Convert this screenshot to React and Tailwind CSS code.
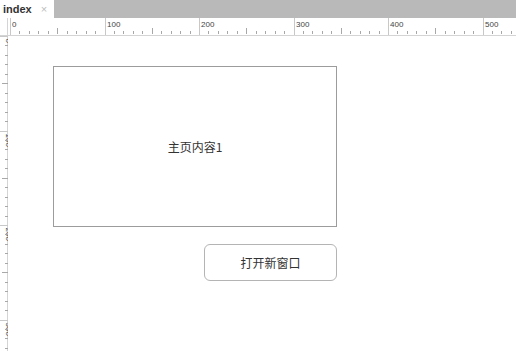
import React from 'react';

const SCALE = 0.945;

// Horizontal ruler along the top of the canvas
const TopRuler = () => {
  const ticks = [];
  for (let u = 0; u <= 540; u += 10) ticks.push(u);
  return (
    <svg width="508" height="17" className="block">
      {ticks.map((u) => {
        const x = 2.5 + Math.round(u * SCALE);
        if (u % 100 === 0) {
          return (
            <g key={u}>
              <line x1={x} y1="0" x2={x} y2="17" stroke="#c8c8c8" strokeWidth="1" />
              <text x={x + 1.5} y="9" fontSize="8" fill="#444" fontFamily="Liberation Sans, Arial, sans-serif">
                {u}
              </text>
            </g>
          );
        }
        const h = u % 50 === 0 ? 6 : 3;
        return <line key={u} x1={x} y1={16 - h} x2={x} y2="16" stroke="#a8a8a8" strokeWidth="1" />;
      })}
    </svg>
  );
};

// Vertical ruler along the left of the canvas
const LeftRuler = () => {
  const ticks = [];
  for (let u = 0; u <= 330; u += 10) ticks.push(u);
  return (
    <svg width="8" height="315" className="block">
      {ticks.map((u) => {
        const y = 0.5 + Math.round(u * SCALE);
        if (u % 100 === 0) {
          return (
            <g key={u}>
              <line x1="0" y1={y} x2="8" y2={y} stroke="#c8c8c8" strokeWidth="1" />
              <text
                x="0"
                y="0"
                fontSize="8"
                fill="#444"
                fontFamily="Liberation Sans, Arial, sans-serif"
                transform={`translate(6 ${y + 2}) rotate(90)`}
              >
                {u}
              </text>
            </g>
          );
        }
        const w = u % 50 === 0 ? 6 : 3;
        return <line key={u} x1={8 - w} y1={y} x2="8" y2={y} stroke="#a8a8a8" strokeWidth="1" />;
      })}
    </svg>
  );
};

const App = () => {
  return (
    <div className="w-[516px] h-[351px] overflow-hidden bg-white flex flex-col">
      {/* Tab strip */}
      <div className="h-[18px] bg-[#b9b9b9] flex shrink-0">
        <div className="w-[54px] bg-white flex items-center pl-[3px] gap-[9px]">
          <span className="text-[11px] font-bold text-[#333] leading-none font-['Liberation_Sans',Arial,sans-serif]">index</span>
          <span className="text-[11px] text-[#bdbdbd] leading-none font-['Liberation_Sans',Arial,sans-serif]">×</span>
        </div>
      </div>

      {/* Top ruler */}
      <div className="flex h-[18px] shrink-0 border-b border-[#d4d4d4]">
        <div className="w-[8px] border-r border-[#d4d4d4]" />
        <TopRuler />
      </div>

      {/* Left ruler + canvas */}
      <div className="flex flex-1">
        <div className="w-[8px] border-r border-[#d4d4d4] shrink-0">
          <LeftRuler />
        </div>
        <div className="flex-1 flex flex-col pl-[45px] pt-[30px] font-['Noto_Sans_CJK_SC',sans-serif]">
          <div className="w-[284px] h-[161px] border border-[#9c9c9c] flex items-center justify-center text-[12px] text-[#333]">
            主页内容1
          </div>
          <div className="ml-[151px] mt-[17px] w-[133px] h-[37px] border border-[#b4b4b4] rounded-[6px] flex items-center justify-center text-[12px] text-[#333]">
            打开新窗口
          </div>
        </div>
      </div>
    </div>
  );
};

export default App;
